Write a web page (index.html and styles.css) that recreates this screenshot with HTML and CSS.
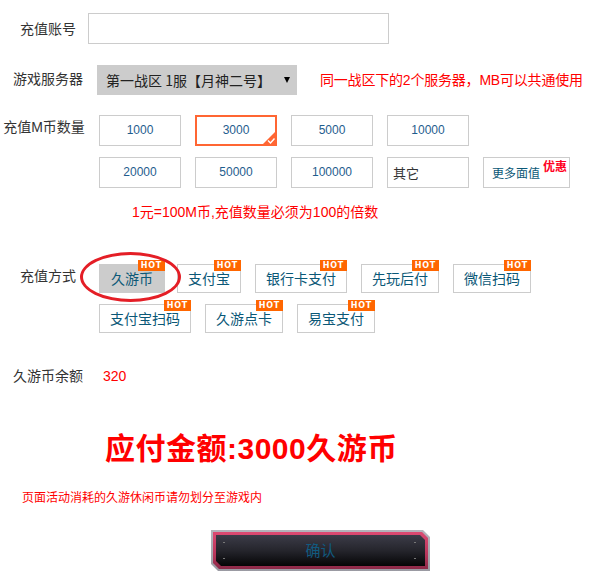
FILE: index.html
```html
<!DOCTYPE html>
<html lang="zh">
<head>
<meta charset="utf-8">
<title>充值</title>
<link rel="stylesheet" href="styles.css">
</head>
<body>
<div class="page">
  <div class="row r-account">
    <span class="label">充值账号</span>
    <input class="account" type="text">
  </div>

  <div class="row r-server">
    <span class="label">游戏服务器</span>
    <div class="select">第一战区 1服【月神二号】<span class="arrow"></span></div>
    <span class="tip">同一战区下的2个服务器，MB可以共通使用</span>
  </div>

  <div class="row r-amount">
    <span class="label lbl-tall">充值M币数量</span>
    <div class="amounts">
      <div class="amt-row">
        <div class="amt">1000</div>
        <div class="amt selected">3000<span class="check"><svg width="14" height="14" viewBox="0 0 14 14"><polygon points="14,0 14,14 0,14" fill="#ff6633"/><polyline points="6,9.5 8.5,12 12.5,7.5" fill="none" stroke="#fff" stroke-width="1.4"/></svg></span></div>
        <div class="amt">5000</div>
        <div class="amt">10000</div>
      </div>
      <div class="amt-row">
        <div class="amt">20000</div>
        <div class="amt">50000</div>
        <div class="amt">100000</div>
        <div class="amt other">其它</div>
        <div class="amt more">更多面值<span class="promo">优惠</span></div>
      </div>
    </div>
  </div>

  <div class="note">1元=100M币,充值数量必须为100的倍数</div>

  <div class="row r-pay">
    <span class="label lbl-pay">充值方式</span>
    <div class="pays">
      <div class="pay active">久游币<span class="hot">HOT</span></div>
      <div class="pay">支付宝<span class="hot">HOT</span></div>
      <div class="pay">银行卡支付<span class="hot">HOT</span></div>
      <div class="pay">先玩后付<span class="hot">HOT</span></div>
      <div class="pay">微信扫码<span class="hot">HOT</span></div>
      <div class="pay">支付宝扫码<span class="hot">HOT</span></div>
      <div class="pay">久游点卡<span class="hot">HOT</span></div>
      <div class="pay">易宝支付<span class="hot">HOT</span></div>
    </div>
    <span class="circle"></span>
  </div>

  <div class="row r-balance">
    <span class="label">久游币余额</span>
    <span class="balance">320</span>
  </div>

  <div class="total">应付金额:3000久游币</div>

  <div class="warn">页面活动消耗的久游休闲币请勿划分至游戏内</div>

  <div class="confirm">
    <div class="confirm-pink">
      <div class="confirm-inner">
        <span class="dot d1"></span><span class="dot d2"></span><span class="dot d3"></span><span class="dot d4"></span>
        确认
      </div>
    </div>
  </div>
</div>
</body>
</html>
```

FILE: styles.css
```css
* { box-sizing: border-box; }
html, body { margin: 0; padding: 0; background: #fff; }
body {
  font-family: "Liberation Sans", "Noto Sans CJK SC", sans-serif;
  font-size: 14px;
  color: #333;
  width: 598px;
  height: 585px;
  overflow: hidden;
}
.page { padding-top: 13px; }

.row { display: flex; align-items: center; position: relative; }
.label {
  flex: 0 0 88px;
  padding-left: 8px;
  display: flex;
  justify-content: center;
  white-space: nowrap;
  color: #333;
  font-size: 14px;
  line-height: 20px;
}

/* account */
.account {
  width: 301px;
  height: 31px;
  border: 1px solid #ccc;
  background: #fff;
  margin: 0;
  padding: 0 6px;
  outline: none;
}

/* server */
.r-server { margin-top: 21px; }
.r-server .label { margin-top: -3px; }
.select {
  margin-left: 9px;
  width: 200px;
  height: 30px;
  background: #ccc;
  color: #222;
  font-family: "Noto Sans CJK SC", sans-serif;
  font-size: 14px;
  line-height: 30px;
  padding-left: 9px;
  position: relative;
  white-space: nowrap;
}
.arrow {
  position: absolute;
  right: 7px;
  top: 12px;
  width: 0;
  height: 0;
  border-left: 3.5px solid transparent;
  border-right: 3.5px solid transparent;
  border-top: 6px solid #000;
}
.tip {
  margin-left: 23px;
  color: #ff0000;
  font-size: 14px;
  letter-spacing: -0.2px;
  white-space: nowrap;
  margin-top: -3px;
}

/* amounts */
.r-amount { margin-top: 20px; align-items: flex-start; }
.lbl-tall { line-height: 24px; padding-left: 0; }
.amounts {
  margin-left: 11px;
  display: flex;
  flex-direction: column;
  gap: 11px;
}
.amt-row { display: flex; gap: 14px; }
.amt {
  width: 82px;
  height: 31px;
  border: 1px solid #ccc;
  text-align: center;
  line-height: 29px;
  font-size: 12px;
  color: #1f5d8e;
  position: relative;
}
.amt.selected { border: 2px solid #ff6633; line-height: 27px; }
.check { position: absolute; right: -1px; bottom: -1px; width: 14px; height: 14px; line-height: 0; }
.check svg { display: block; }
.amt.other {
  text-align: left;
  padding-left: 5px;
  font-size: 13px;
  color: #333;
  font-family: "Noto Sans CJK SC", sans-serif;
}
.amt.more {
  width: 87px;
  text-align: left;
  padding-left: 8px;
  font-size: 12px;
  color: #0b5877;
  font-family: "Noto Sans CJK SC", sans-serif;
}
.promo {
  position: absolute;
  left: 59px;
  top: 2px;
  font-size: 12px;
  line-height: 12px;
  font-weight: bold;
  color: #ff0022;
}

.note {
  margin-top: 14px;
  margin-left: 132px;
  color: #ff0000;
  font-size: 14px;
  line-height: 20px;
}

/* pay */
.r-pay { margin-top: 42px; align-items: flex-start; }
.lbl-pay { line-height: 24px; }
.pays {
  margin-left: 11px;
  display: flex;
  flex-wrap: wrap;
  gap: 11px 14px;
  width: 460px;
}
.pay {
  height: 29px;
  border: 1px solid #ccc;
  padding: 0 10px;
  line-height: 27px;
  font-size: 14px;
  color: #0b5877;
  font-family: "Noto Sans CJK SC", sans-serif;
  position: relative;
  white-space: nowrap;
}
.pay.active { background: #ccc; border-color: #ccc; padding: 0 11px; margin-right: -2px; }
.hot {
  position: absolute;
  right: -1px;
  top: -5px;
  height: 11px;
  padding: 0 3px;
  background: #ff6600;
  color: #fff;
  font-family: "DejaVu Sans", sans-serif;
  font-weight: bold;
  font-size: 8px;
  line-height: 11px;
  letter-spacing: 0.8px;
}
.circle {
  position: absolute;
  left: 80px;
  top: -12px;
  width: 101px;
  height: 50px;
  border: 3px solid #e41e26;
  border-radius: 50%;
  pointer-events: none;
}

/* balance */
.r-balance { margin-top: 33px; }
.balance { margin-left: 15px; color: #ff0000; font-size: 14px; line-height: 20px; }

.total {
  margin-top: 43px;
  margin-left: 105px;
  color: #ff0000;
  font-size: 30px;
  font-weight: bold;
  letter-spacing: 0.5px;
  line-height: 40px;
  font-family: "Liberation Sans", "Noto Sans CJK SC", sans-serif;
  white-space: nowrap;
}

.warn {
  margin-top: 20px;
  margin-left: 22px;
  color: #ff0000;
  font-size: 12px;
  line-height: 16px;
  font-family: "Noto Sans CJK SC", sans-serif;
}

/* confirm button */
.confirm {
  margin-top: 25px;
  margin-left: 211px;
  width: 219px;
  height: 41px;
  padding: 2px;
  background: linear-gradient(#b4b4bb, #9a9aa2);
  clip-path: polygon(0 0, calc(100% - 7px) 0, 100% 7px, 100% 100%, 7px 100%, 0 calc(100% - 7px));
}
.confirm-pink {
  height: 100%;
  padding: 3px;
  background: linear-gradient(#dc4a72, #b8365c 60%, #8c2a48);
  clip-path: polygon(0 0, calc(100% - 6px) 0, 100% 6px, 100% 100%, 6px 100%, 0 calc(100% - 6px));
}
.confirm-inner {
  position: relative;
  height: 100%;
  background: linear-gradient(#3c3c48, #25252c 50%, #050506);
  clip-path: polygon(0 0, calc(100% - 5px) 0, 100% 5px, 100% 100%, 5px 100%, 0 calc(100% - 5px));
  color: #115a80;
  font-family: "Noto Sans CJK SC", sans-serif;
  font-size: 15px;
  line-height: 30px;
  text-align: center;
}
.dot { position: absolute; width: 2px; height: 1px; background: #777; }
.d1 { left: 7px; top: 7px; }
.d2 { left: 7px; bottom: 7px; }
.d3 { right: 9px; top: 7px; }
.d4 { right: 9px; bottom: 7px; }
```
